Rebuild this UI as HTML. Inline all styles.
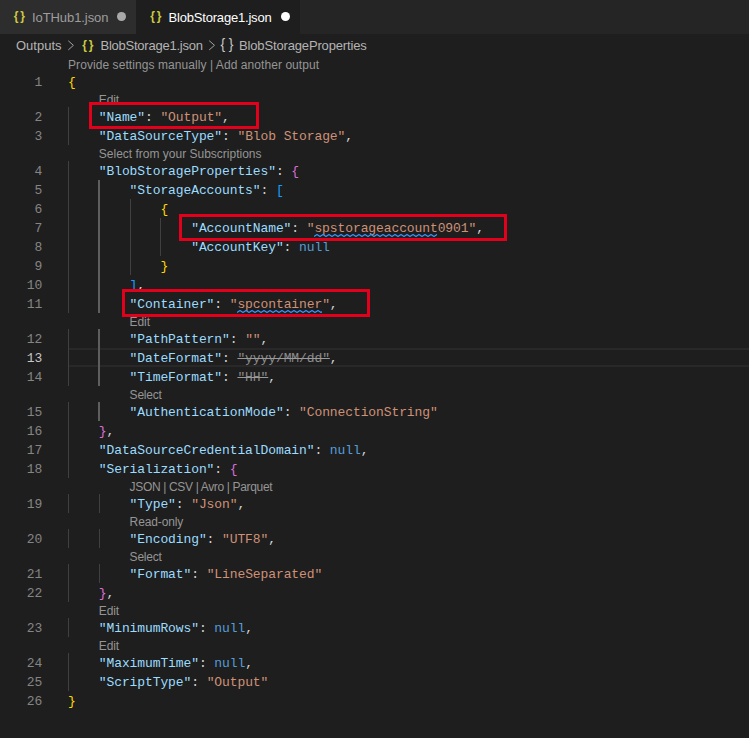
<!DOCTYPE html>
<html><head><meta charset="utf-8"><style>
html,body{margin:0;padding:0}
body{width:749px;height:738px;overflow:hidden;background:#1e1e1e;position:relative;font-family:"Liberation Sans",sans-serif}
.tabs{position:absolute;left:0;top:0;width:749px;height:34px;background:#252526}
.tab{position:absolute;top:0;height:34px}
.tab .t{position:absolute;top:10px;font-size:13px;line-height:16px;white-space:nowrap}
.dot{position:absolute;border-radius:50%}
.bc{position:absolute;top:34px;left:0;width:749px;height:22px;background:#1e1e1e;color:#b4b4b4;font-size:13px}
.bc span{position:absolute;top:4px;line-height:16px;white-space:nowrap}
.ln{position:absolute;left:0;width:42.2px;letter-spacing:-0.100px;text-align:right;height:19px;line-height:19px;font-family:"Liberation Mono",monospace;font-size:13px;color:#858585}
.ln.act{color:#c6c6c6}
.code{position:absolute;height:19px;line-height:19px;white-space:pre;font-family:"Liberation Mono",monospace;font-size:13px;letter-spacing:-0.100px;color:#d4d4d4}
.k{color:#9cdcfe} .s{color:#ce9178} .n{color:#569cd6} .p{color:#d4d4d4}
.b1{color:#ffd700} .b2{color:#da70d6} .b3{color:#179fff}
.d{color:#8c8c8c;text-decoration:line-through;text-decoration-color:#9a9a9a}
.sq{color:#ce9178}
.cl{position:absolute;height:16px;line-height:16px;font-size:12px;color:#959595;white-space:nowrap}
.sqg{position:absolute;overflow:hidden}
.gbr{position:absolute;line-height:16px;white-space:nowrap}
.g{position:absolute;width:1px;background:#404040}
.ga{background:#5e5e5e;width:2px;margin-left:-0.8px}
.cur{position:absolute;left:68px;right:0;top:348px;height:15px;border-top:2px solid #282828;border-bottom:2px solid #282828}
.box{position:absolute;border:3px solid #e2001a;box-sizing:border-box}
</style></head><body>
<div class="tabs">
  <div class="tab" style="left:0;width:136px;background:#2d2d2d">
    <div class="t" style="left:32px;color:#9d9d9d;letter-spacing:-0.08px">IoTHub1.json</div>
    <div class="dot" style="left:116.8px;top:12.4px;width:8.8px;height:8.8px;background:#a9a9a9"></div>
  </div>
  <div class="tab" style="left:136px;width:164px;background:#1e1e1e">
    <div class="t" style="left:32.5px;color:#ffffff;letter-spacing:-0.19px">BlobStorage1.json</div>
    <div class="dot" style="left:144.8px;top:12.2px;width:9.2px;height:9.2px;background:#ffffff"></div>
  </div>
</div>
<div class="bc">
  <span style="left:16px">Outputs</span>
  <span style="left:100.5px;letter-spacing:-0.24px">BlobStorage1.json</span>
  <span style="left:239px;letter-spacing:-0.15px">BlobStorageProperties</span>
</div>
<div class="gbr" style="left:13.7px;top:8px;color:#cbcb41;font-size:12px;letter-spacing:1.8px;font-weight:bold">{}</div><div class="gbr" style="left:150.2px;top:8px;color:#cbcb41;font-size:12px;letter-spacing:1.8px;font-weight:bold">{}</div><div class="gbr" style="left:82.2px;top:37px;color:#cbcb41;font-size:12px;letter-spacing:1.8px;font-weight:bold">{}</div><div class="gbr" style="left:220.6px;top:36px;color:#c5c5c5;font-size:14px;letter-spacing:3.6px;font-weight:normal">{}</div><svg style="position:absolute;left:0;top:0" width="749" height="60"><path d="M68.30 40.80 L73.40 45.35 L68.30 49.90" fill="none" stroke="#a0a0a0" stroke-width="1.0"/></svg><svg style="position:absolute;left:0;top:0" width="749" height="60"><path d="M209.20 40.70 L214.50 45.30 L209.20 49.90" fill="none" stroke="#a0a0a0" stroke-width="1.0"/></svg>
<div class="cur"></div>
<div class="g" style="left:68.0px;top:107px;height:38px"></div><div class="g" style="left:68.0px;top:161px;height:152px"></div><div class="g" style="left:68.0px;top:329px;height:57px"></div><div class="g" style="left:68.0px;top:402px;height:76px"></div><div class="g" style="left:68.0px;top:494px;height:19px"></div><div class="g" style="left:68.0px;top:529px;height:19px"></div><div class="g" style="left:68.0px;top:564px;height:38px"></div><div class="g" style="left:68.0px;top:618px;height:19px"></div><div class="g" style="left:68.0px;top:653px;height:38px"></div><div class="g ga" style="left:98.8px;top:180px;height:133px"></div><div class="g ga" style="left:98.8px;top:329px;height:57px"></div><div class="g ga" style="left:98.8px;top:402px;height:19px"></div><div class="g" style="left:98.8px;top:494px;height:19px"></div><div class="g" style="left:98.8px;top:529px;height:19px"></div><div class="g" style="left:98.8px;top:564px;height:19px"></div><div class="g" style="left:129.6px;top:199px;height:76px"></div><div class="g" style="left:160.4px;top:218px;height:38px"></div>
<div class="cl" style="top:57px;left:68.0px;letter-spacing:0.07px">Provide settings manually | Add another output</div>
<div class="ln" style="top:73px">1</div>
<div class="code" style="top:73px;left:68.00px"><span class="b1">{</span></div>
<div class="cl" style="top:92px;left:98.8px;letter-spacing:-0.1px">Edit</div>
<div class="ln" style="top:108px">2</div>
<div class="code" style="top:108px;left:98.80px"><span class="k">&quot;Name&quot;</span><span class="p">: </span><span class="s">&quot;Output&quot;</span><span class="p">,</span></div>
<div class="ln" style="top:127px">3</div>
<div class="code" style="top:127px;left:98.80px"><span class="k">&quot;DataSourceType&quot;</span><span class="p">: </span><span class="s">&quot;Blob Storage&quot;</span><span class="p">,</span></div>
<div class="cl" style="top:146px;left:98.8px;letter-spacing:0px">Select from your Subscriptions</div>
<div class="ln" style="top:162px">4</div>
<div class="code" style="top:162px;left:98.80px"><span class="k">&quot;BlobStorageProperties&quot;</span><span class="p">: </span><span class="b2">{</span></div>
<div class="ln" style="top:181px">5</div>
<div class="code" style="top:181px;left:129.60px"><span class="k">&quot;StorageAccounts&quot;</span><span class="p">: </span><span class="b3">[</span></div>
<div class="ln" style="top:200px">6</div>
<div class="code" style="top:200px;left:160.40px"><span class="b1">{</span></div>
<div class="ln" style="top:219px">7</div>
<div class="code" style="top:219px;left:191.20px"><span class="k">&quot;AccountName&quot;</span><span class="p">: </span><span class="s">&quot;</span><span class="sq">spstorageaccount</span><span class="s">0901&quot;</span><span class="p">,</span></div>
<svg class="sqg" style="left:314.4px;top:234px" width="123" height="3"><polyline points="0,2.5 3,0.5 6,2.5 9,0.5 12,2.5 15,0.5 18,2.5 21,0.5 24,2.5 27,0.5 30,2.5 33,0.5 36,2.5 39,0.5 42,2.5 45,0.5 48,2.5 51,0.5 54,2.5 57,0.5 60,2.5 63,0.5 66,2.5 69,0.5 72,2.5 75,0.5 78,2.5 81,0.5 84,2.5 87,0.5 90,2.5 93,0.5 96,2.5 99,0.5 102,2.5 105,0.5 108,2.5 111,0.5 114,2.5 117,0.5 120,2.5 123,0.5 126,2.5" fill="none" stroke="#3794ff" stroke-width="1.2"/></svg>
<div class="ln" style="top:238px">8</div>
<div class="code" style="top:238px;left:191.20px"><span class="k">&quot;AccountKey&quot;</span><span class="p">: </span><span class="n">null</span></div>
<div class="ln" style="top:257px">9</div>
<div class="code" style="top:257px;left:160.40px"><span class="b1">}</span></div>
<div class="ln" style="top:276px">10</div>
<div class="code" style="top:276px;left:129.60px"><span class="b3">]</span><span class="p">,</span></div>
<div class="ln" style="top:295px">11</div>
<div class="code" style="top:295px;left:129.60px"><span class="k">&quot;Container&quot;</span><span class="p">: </span><span class="s">&quot;</span><span class="sq">spcontainer</span><span class="s">&quot;</span><span class="p">,</span></div>
<svg class="sqg" style="left:237.4px;top:310px" width="85" height="3"><polyline points="0,2.5 3,0.5 6,2.5 9,0.5 12,2.5 15,0.5 18,2.5 21,0.5 24,2.5 27,0.5 30,2.5 33,0.5 36,2.5 39,0.5 42,2.5 45,0.5 48,2.5 51,0.5 54,2.5 57,0.5 60,2.5 63,0.5 66,2.5 69,0.5 72,2.5 75,0.5 78,2.5 81,0.5 84,2.5 87,0.5" fill="none" stroke="#3794ff" stroke-width="1.2"/></svg>
<div class="cl" style="top:314px;left:129.6px;letter-spacing:-0.1px">Edit</div>
<div class="ln" style="top:330px">12</div>
<div class="code" style="top:330px;left:129.60px"><span class="k">&quot;PathPattern&quot;</span><span class="p">: </span><span class="s">&quot;&quot;</span><span class="p">,</span></div>
<div class="ln act" style="top:349px">13</div>
<div class="code" style="top:349px;left:129.60px"><span class="k">&quot;DateFormat&quot;</span><span class="p">: </span><span class="d">&quot;yyyy/MM/dd&quot;</span><span class="p">,</span></div>
<div class="ln" style="top:368px">14</div>
<div class="code" style="top:368px;left:129.60px"><span class="k">&quot;TimeFormat&quot;</span><span class="p">: </span><span class="d">&quot;HH&quot;</span><span class="p">,</span></div>
<div class="cl" style="top:387px;left:129.6px;letter-spacing:-0.2px">Select</div>
<div class="ln" style="top:403px">15</div>
<div class="code" style="top:403px;left:129.60px"><span class="k">&quot;AuthenticationMode&quot;</span><span class="p">: </span><span class="s">&quot;ConnectionString&quot;</span></div>
<div class="ln" style="top:422px">16</div>
<div class="code" style="top:422px;left:98.80px"><span class="b2">}</span><span class="p">,</span></div>
<div class="ln" style="top:441px">17</div>
<div class="code" style="top:441px;left:98.80px"><span class="k">&quot;DataSourceCredentialDomain&quot;</span><span class="p">: </span><span class="n">null</span><span class="p">,</span></div>
<div class="ln" style="top:460px">18</div>
<div class="code" style="top:460px;left:98.80px"><span class="k">&quot;Serialization&quot;</span><span class="p">: </span><span class="b2">{</span></div>
<div class="cl" style="top:479px;left:129.6px;letter-spacing:-0.34px">JSON | CSV | Avro | Parquet</div>
<div class="ln" style="top:495px">19</div>
<div class="code" style="top:495px;left:129.60px"><span class="k">&quot;Type&quot;</span><span class="p">: </span><span class="s">&quot;Json&quot;</span><span class="p">,</span></div>
<div class="cl" style="top:514px;left:129.6px;letter-spacing:-0.12px">Read-only</div>
<div class="ln" style="top:530px">20</div>
<div class="code" style="top:530px;left:129.60px"><span class="k">&quot;Encoding&quot;</span><span class="p">: </span><span class="s">&quot;UTF8&quot;</span><span class="p">,</span></div>
<div class="cl" style="top:549px;left:129.6px;letter-spacing:-0.2px">Select</div>
<div class="ln" style="top:565px">21</div>
<div class="code" style="top:565px;left:129.60px"><span class="k">&quot;Format&quot;</span><span class="p">: </span><span class="s">&quot;LineSeparated&quot;</span></div>
<div class="ln" style="top:584px">22</div>
<div class="code" style="top:584px;left:98.80px"><span class="b2">}</span><span class="p">,</span></div>
<div class="cl" style="top:603px;left:98.8px;letter-spacing:-0.1px">Edit</div>
<div class="ln" style="top:619px">23</div>
<div class="code" style="top:619px;left:98.80px"><span class="k">&quot;MinimumRows&quot;</span><span class="p">: </span><span class="n">null</span><span class="p">,</span></div>
<div class="cl" style="top:638px;left:98.8px;letter-spacing:-0.1px">Edit</div>
<div class="ln" style="top:654px">24</div>
<div class="code" style="top:654px;left:98.80px"><span class="k">&quot;MaximumTime&quot;</span><span class="p">: </span><span class="n">null</span><span class="p">,</span></div>
<div class="ln" style="top:673px">25</div>
<div class="code" style="top:673px;left:98.80px"><span class="k">&quot;ScriptType&quot;</span><span class="p">: </span><span class="s">&quot;Output&quot;</span></div>
<div class="ln" style="top:692px">26</div>
<div class="code" style="top:692px;left:68.00px"><span class="b1">}</span></div>
<div class="box" style="left:89px;top:102px;width:170px;height:27px"></div>
<div class="box" style="left:179px;top:214px;width:328px;height:27px"></div>
<div class="box" style="left:122px;top:289px;width:248px;height:28px"></div>
</body></html>
